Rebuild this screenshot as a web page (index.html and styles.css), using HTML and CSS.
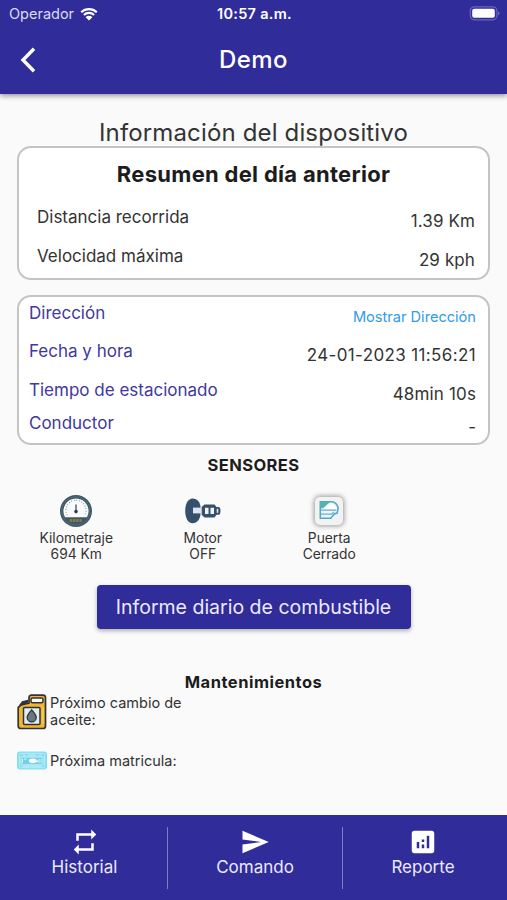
FILE: index.html
```html
<!DOCTYPE html>
<html lang="es">
<head>
    <meta charset="UTF-8">
    <meta name="viewport" content="width=device-width, initial-scale=1.0">
    <title>Demo</title>
    <link rel="stylesheet" href="styles.css">
</head>
<body>
    <header class="header">
        <div class="status-bar">
            <div class="carrier">
                <span>Operador</span>
                <svg class="wifi" viewBox="0 0 18 14">
                    <path d="M1.2 5.2a11.2 11.2 0 0 1 15.6 0M3.9 8a7.3 7.3 0 0 1 10.2 0" fill="none" stroke="#fff" stroke-width="2.2"/>
                    <path d="M9 13.6L5.6 10.2a4.8 4.8 0 0 1 6.8 0z" fill="#fff"/>
                </svg>
            </div>
            <div class="clock">10:57 a.m.</div>
            <svg class="battery" viewBox="0 0 31 15">
                <rect x="1.3" y="0.8" width="26.6" height="13" rx="4" fill="none" stroke="#6b66b8" stroke-width="1.2"/>
                <rect x="3.2" y="2.8" width="22.6" height="9" rx="2" fill="#fff"/>
                <path d="M29 5.2v4.2q1.5-.7 1.5-2.1T29 5.2z" fill="#6b66b8"/>
            </svg>
        </div>
        <div class="app-bar">
            <svg class="back" viewBox="0 0 16 26"><path d="M14 1.8L3 13l11 11.2" fill="none" stroke="#fff" stroke-width="3.4"/></svg>
            <h1>Demo</h1>
        </div>
    </header>

    <main class="content">
        <h2 class="page-title">Información del dispositivo</h2>

        <section class="card summary">
            <h3>Resumen del día anterior</h3>
            <div class="row">
                <span class="label">Distancia recorrida</span>
                <span class="value">1.39 Km</span>
            </div>
            <div class="row">
                <span class="label">Velocidad máxima</span>
                <span class="value">29 kph</span>
            </div>
        </section>

        <section class="card details">
            <div class="row address">
                <span class="label">Dirección</span>
                <a class="value link">Mostrar Dirección</a>
            </div>
            <div class="row date">
                <span class="label">Fecha y hora</span>
                <span class="value">24-01-2023 11:56:21</span>
            </div>
            <div class="row parked">
                <span class="label">Tiempo de estacionado</span>
                <span class="value">48min 10s</span>
            </div>
            <div class="row driver">
                <span class="label">Conductor</span>
                <span class="value">-</span>
            </div>
        </section>

        <h4 class="sensors-title">SENSORES</h4>
        <div class="sensors">
            <div class="sensor">
                <svg viewBox="0 0 40 36">
                    <circle cx="20" cy="18" r="16" fill="#3d5969"/>
                    <circle cx="20" cy="18" r="14.2" fill="none" stroke="#58707e" stroke-width="0.8"/>
                    <path d="M9 24.2a12.6 12.6 0 1 1 22 0z" fill="#fafafa"/>
                    <path d="M11.2 22a10 10 0 1 1 17.6 0" fill="none" stroke="#8a979e" stroke-width="1.3" stroke-dasharray="0.8 1.8"/>
                    <path d="M20 11.5v8" stroke="#2c404c" stroke-width="1.2"/>
                    <circle cx="20" cy="18.6" r="1.8" fill="#2c404c"/>
                    <path d="M13.8 27.5h12.4" stroke="#8b7a43" stroke-width="3" stroke-dasharray="2.4 .8"/>
                </svg>
                <span>Kilometraje<br>694 Km</span>
            </div>
            <div class="sensor">
                <svg viewBox="0 0 40 36">
                    <path d="M9.5 5.6c5 0 7.6 4 8 8.2v7.4c-.4 4.400-3 9-8 9-4.500 0-7.300-5.600-7.300-12.300S5 5.600 9.500 5.600z" fill="#35506a"/>
                    <rect x="10" y="14.600" width="8.500" height="5.800" fill="#dfe3ee"/>
                    <path d="M21.500 11.400h10l2 2.600h2.500q1.500.5 1.500 3.900t-1.500 3.900h-2.500l-2 2.600h-10l-2.800-2.600v-7.800z" fill="#35506a"/>
                    <path d="M22 14.800h3.500v6.200H22zM27.500 14.800H31v6.200h-3.500z" fill="#f1f3f8"/>
                    <path d="M34.500 15.800v4" stroke="#dfe3ee" stroke-width="1.600"/>
                </svg>
                <span>Motor<br>OFF</span>
            </div>
            <div class="sensor">
                <div class="door">
                    <svg viewBox="0 0 24 22">
                        <defs>
                            <linearGradient id="door" x1="0" y1="0" x2="1" y2="1">
                                <stop offset="0" stop-color="#4db2ad"/>
                                <stop offset="1" stop-color="#5aa2dc"/>
                            </linearGradient>
                        </defs>
                        <path d="M2.500 2H15q5 .5 7 6.500l-1 5.500-3.500 1.500L14 20H2.500z" fill="#eef7fb" stroke="url(#door)" stroke-width="1.700"/>
                        <path d="M2.500 2h11L5.500 9h-3z" fill="#52b3b4"/>
                        <path d="M6 9.800l5.500-5.300H15q3 .5 4.500 5.300z" fill="#fff"/>
                        <path d="M3 11h17M3 15.500h12l2.500-2.500" fill="none" stroke="#69acd8" stroke-width="1.400"/>
                    </svg>
                </div>
                <span>Puerta<br>Cerrado</span>
            </div>
        </div>

        <button class="report-btn">Informe diario de combustible</button>

        <h4 class="maintenance-title">Mantenimientos</h4>
        <div class="maintenance">
            <div class="item oil">
                <svg viewBox="0 0 30 36">
                    <path d="M1.200 13.500L4 11l8-2V3.500Q12 1.200 14.500 1.200h11.500q2.500 0 2.500 2.500V32q0 2.500-2.500 2.500H4Q1.200 34.500 1.200 32z" fill="#f3b62f" stroke="#30333a" stroke-width="1.700"/>
                    <path d="M2 11.200L5 7.200l6-1.500v3.300l-6 2.200z" fill="#30333a"/>
                    <rect x="14" y="4" width="12" height="4.800" rx="1.500" fill="#fafafa" stroke="#30333a" stroke-width="1.500"/>
                    <rect x="6.500" y="13.500" width="16.500" height="17" rx="1" fill="#dfecf2" stroke="#30333a" stroke-width="1.500"/>
                    <path d="M14.700 15.800c2.500 3.200 4.500 5.100 4.500 7.600a4.500 4.500 0 0 1-9 0c0-2.500 2-4.400 4.500-7.600z" fill="#697780" stroke="#30333a" stroke-width="1.300"/>
                    <path d="M26 13v17" stroke="#fbd45d" stroke-width="1.200"/>
                </svg>
                <span>Próximo cambio de aceite:</span>
            </div>
            <div class="item plate">
                <svg viewBox="0 0 30 19">
                    <rect x="0" y="0.500" width="30" height="18" rx="3" fill="#86ddf1"/>
                    <rect x="2.300" y="2.300" width="25.400" height="14.400" rx="1.500" fill="none" stroke="#b9f0f8" stroke-width="0.900"/>
                    <rect x="4" y="6" width="22" height="7.800" rx="1" fill="#74d0e8" stroke="#cdf6fb" stroke-width="0.900"/>
                    <path d="M5.500 4.200h3M11 4.200h8M22 4.200h2.500M5.500 15.200h19" stroke="#c9f4fa" stroke-width="0.900"/>
                    <path d="M5.500 8v4M7 8h2.500M22 8v4M24.200 8v4" stroke="#d6f8fc" stroke-width="1"/>
                    <ellipse cx="15.700" cy="9.800" rx="3.800" ry="2.300" fill="#fff"/>
                    <circle cx="20" cy="10.200" r="1" fill="#fff"/>
                </svg>
                <span>Próxima matricula:</span>
            </div>
        </div>
    </main>

    <nav class="bottom-nav">
        <a class="tab history">
            <svg viewBox="0 0 24 24"><path d="M7 7h10v3l4-4-4-4v3H5v6h2V7zm10 10H7v-3l-4 4 4 4v-3h12v-6h-2v4z" fill="#fff"/></svg>
            <span>Historial</span>
        </a>
        <a class="tab command">
            <svg viewBox="0 0 24 24"><path d="M2.010 21L23 12 2.010 3 2 10l15 2-15 2z" fill="#fff"/></svg>
            <span>Comando</span>
        </a>
        <a class="tab report">
            <svg viewBox="0 0 24 24"><path d="M19 3H5c-1.100 0-2 .9-2 2v14c0 1.100.9 2 2 2h14c1.100 0 2-.9 2-2V5c0-1.100-.9-2-2-2zM9 17H7v-5h2v5zm4 0h-2v-3h2v3zm0-5h-2v-2h2v2zm4 5h-2V7h2v10z" fill="#fff"/></svg>
            <span>Reporte</span>
        </a>
    </nav>
</body>
</html>
```
FILE: styles.css
```css
* {
    box-sizing: border-box;
}

body {
    font-family: Inter, "Liberation Sans", sans-serif;
    margin: 0;
    height: 900px;
    background-color: #fafafa;
    color: #333;
    display: flex;
    flex-direction: column;
    overflow: hidden;
}

h1, h2, h3, h4 {
    margin: 0;
}

svg {
    display: block;
}

/* Header */
.header {
    height: 94px;
    flex: none;
    background-color: #302c9a;
    color: #fff;
    box-shadow: 0 2px 5px rgba(0, 0, 0, 0.4);
}

.status-bar {
    height: 27px;
    padding: 0 7px 0 9px;
    display: grid;
    grid-template-columns: 1fr auto 1fr;
    align-items: center;
}

.carrier {
    display: flex;
    align-items: center;
    gap: 6px;
    font-size: 14.5px;
    color: #dcdaf6;
}

.wifi {
    width: 18px;
    height: 14px;
}

.clock {
    font-size: 14.5px;
    font-weight: 600;
    letter-spacing: 0.3px;
}

.battery {
    width: 31px;
    height: 15px;
    justify-self: end;
}

.app-bar {
    height: 65px;
    padding: 0 20px;
    display: grid;
    grid-template-columns: 1fr auto 1fr;
    align-items: center;
}

.back {
    width: 16px;
    height: 26px;
}

h1 {
    font-size: 24px;
    font-weight: 500;
    letter-spacing: 0.4px;
}

/* Content */
.content {
    flex: 1;
    padding: 25px 17px 0;
}

.page-title {
    height: 27px;
    font-size: 24px;
    line-height: 28px;
    font-weight: 400;
    letter-spacing: 0.15px;
    text-align: center;
}

.card {
    background-color: #fff;
    border: 2px solid #c4c4c4;
    border-radius: 14px;
}

.row {
    display: flex;
    justify-content: space-between;
    font-size: 17px;
    line-height: 22px;
}

.value {
    padding-top: 4px;
}

.summary {
    height: 134px;
    padding: 12px 13px 0 18px;
}

.summary h3 {
    margin: 0 5px 18px 0;
    font-size: 22px;
    line-height: 28px;
    font-weight: 700;
    letter-spacing: 0.3px;
    text-align: center;
    color: #1c1c1c;
}

.summary .row {
    height: 39px;
}

.summary .value {
    letter-spacing: 0.1px;
}

.details {
    height: 150px;
    margin-top: 15px;
    padding: 5px 12px 0 10px;
}

.details .label {
    color: #4038a0;
}

.details .link {
    font-size: 14.6px;
    color: #2f9bea;
}

.address {
    height: 38px;
}

.date {
    height: 39px;
}

.date .value {
    letter-spacing: 0.37px;
}

.parked {
    height: 33px;
}

.parked .value {
    letter-spacing: 0.15px;
}

.sensors-title {
    margin-top: 9px;
    font-size: 16.5px;
    line-height: 22px;
    font-weight: 700;
    letter-spacing: 0.4px;
    text-align: center;
    color: #1c1c1c;
}

.sensors {
    display: flex;
    margin: 17px 0 0 -4px;
}

.sensor {
    width: 126.5px;
    display: flex;
    flex-direction: column;
    align-items: center;
    font-size: 13.8px;
    line-height: 16px;
    text-align: center;
}

.sensor > svg {
    width: 40px;
    height: 36px;
    margin-bottom: 1px;
}

.door {
    width: 28px;
    height: 28px;
    margin: 4px 0 5px;
    padding: 3px;
    border-radius: 5px;
    background-color: #f2f2f2;
    box-shadow: 0 0 5px 1px rgba(0, 0, 0, 0.4);
}

.report-btn {
    display: block;
    width: 314px;
    height: 44px;
    margin: 23px auto 0;
    padding: 0;
    border: none;
    border-radius: 4px;
    background-color: #302c9a;
    color: #eceaff;
    font-family: inherit;
    font-size: 19.5px;
    box-shadow: 0 2px 4px rgba(0, 0, 0, 0.3);
}

.maintenance-title {
    margin-top: 43px;
    font-size: 16.5px;
    line-height: 21px;
    font-weight: 700;
    letter-spacing: 0.5px;
    text-align: center;
    color: #1c1c1c;
}

.item {
    display: flex;
    align-items: center;
    gap: 3px;
    font-size: 14.5px;
    line-height: 17px;
}

.item span {
    width: 145px;
}

.item svg {
    width: 30px;
    flex: none;
}

.oil {
    height: 37px;
}

.oil svg {
    height: 36px;
}

.oil span {
    padding-bottom: 1px;
}

.plate {
    margin-top: 21px;
}

.plate svg {
    height: 19px;
}

/* Bottom navigation */
.bottom-nav {
    height: 85px;
    flex: none;
    padding: 12px 4px 0 2px;
    background-color: #302c9a;
    color: #eceaff;
    display: flex;
}

.tab {
    height: 62px;
    display: flex;
    flex-direction: column;
    align-items: center;
    font-size: 17px;
    line-height: 24px;
}

.tab svg {
    width: 30px;
    height: 30px;
    margin-bottom: -2px;
}

.history {
    width: 165px;
}

.command {
    width: 176px;
    border-left: 1px solid #817ec2;
    border-right: 1px solid #817ec2;
}

.report {
    flex: 1;
}
```
